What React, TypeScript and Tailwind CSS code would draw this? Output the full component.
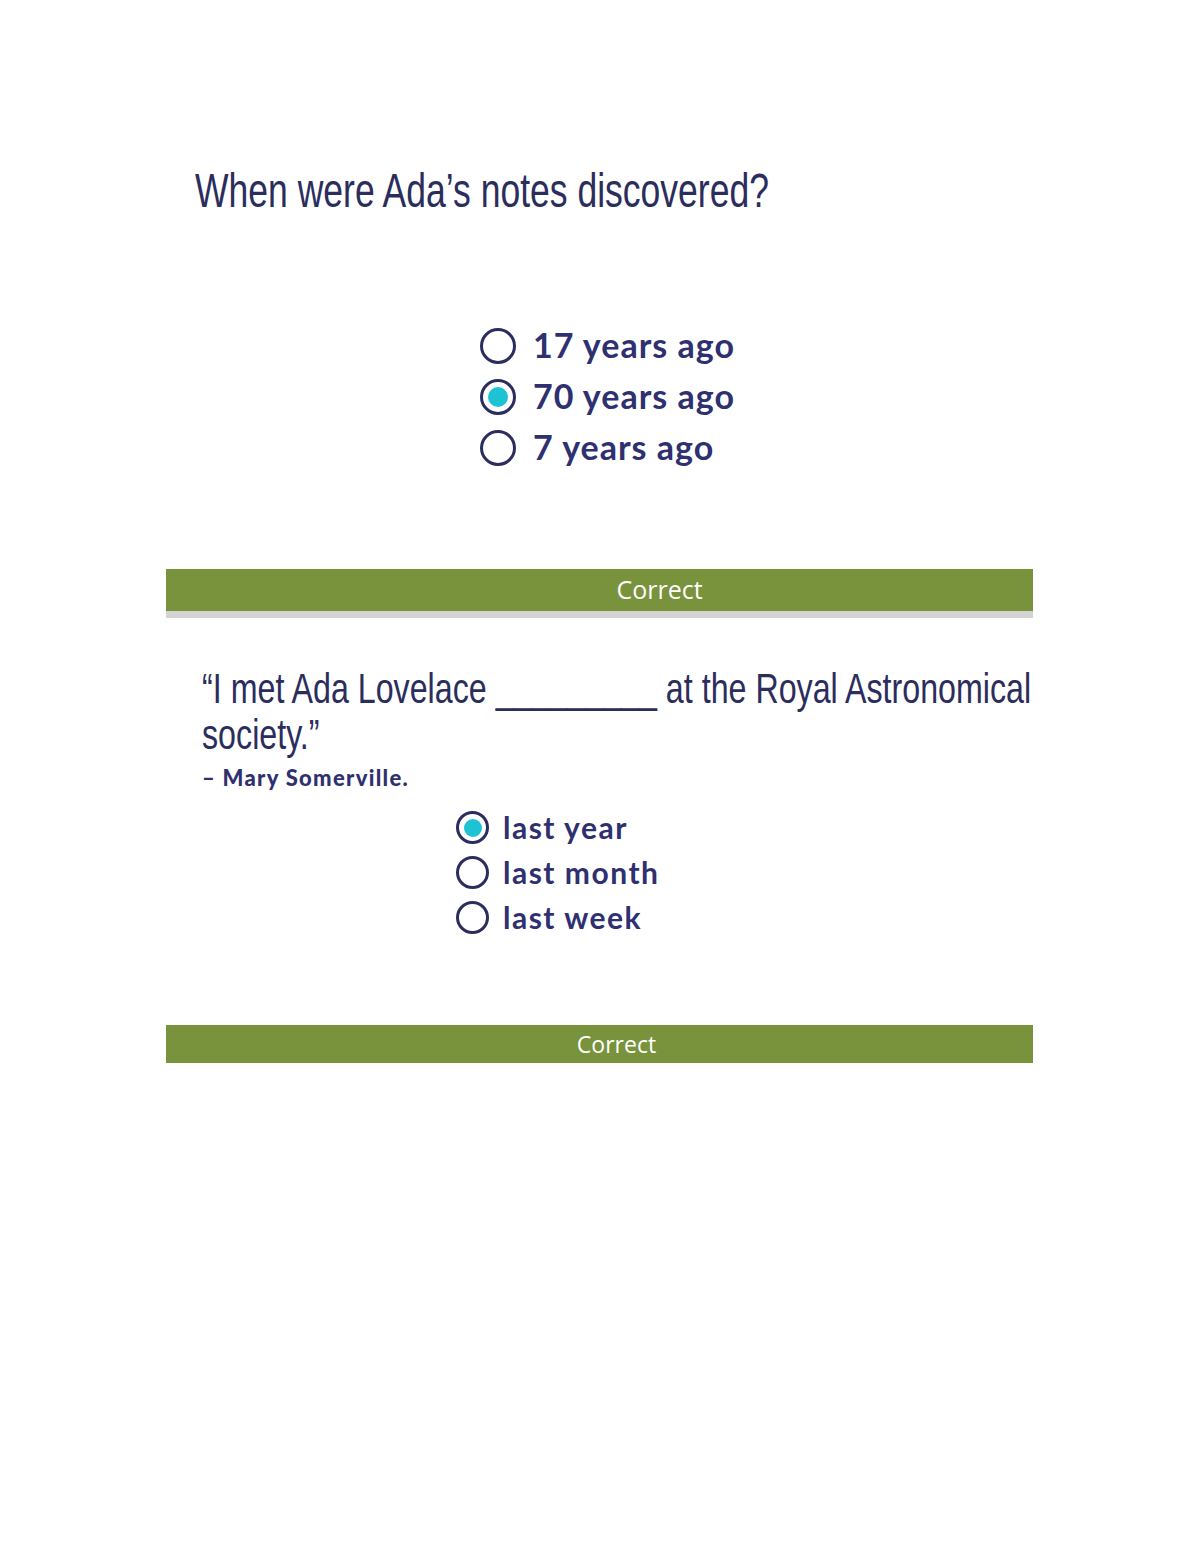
import React from 'react';

type Option = { label: string; selected?: boolean };

const q1: Option[] = [
  { label: '17 years ago' },
  { label: '70 years ago', selected: true },
  { label: '7 years ago' },
];

const q2: Option[] = [
  { label: 'last year', selected: true },
  { label: 'last month' },
  { label: 'last week' },
];

function Radio({ selected, size }: { selected?: boolean; size: 'lg' | 'sm' }) {
  return (
    <span
      className={
        size === 'lg'
          ? 'flex items-center justify-center w-[36px] h-[36px] rounded-full border-[3px] border-[#2b2d5e] shrink-0'
          : 'flex items-center justify-center w-[33px] h-[33px] rounded-full border-[3px] border-[#2b2d5e] shrink-0'
      }
    >
      {selected && (
        <span
          className={
            size === 'lg'
              ? 'w-[20px] h-[20px] rounded-full bg-[#1ec3d3]'
              : 'w-[18px] h-[18px] rounded-full bg-[#1ec3d3]'
          }
        />
      )}
    </span>
  );
}

function ResultBar({ shift, tall }: { shift: string; tall?: boolean }) {
  return (
    <div>
      <div
        className={
          tall
            ? 'h-[42px] bg-[#78933c] flex items-center justify-center'
            : 'h-[38px] bg-[#78933c] flex items-center justify-center'
        }
      >
        <span
          className={
            'text-white font-["Open_Sans"] ' +
            (tall ? 'text-[25px] ' : 'text-[23px] ') +
            shift
          }
        >
          Correct
        </span>
      </div>
      {tall && <div className="h-[7px] bg-[#d3d3d3]" />}
    </div>
  );
}

export default function App() {
  return (
    <div className="w-[1200px] min-h-[1553px] bg-white">
      <div className="ml-[166px] w-[867px] pt-[166px]">
        {/* condensed heading: no narrow face installed, so squeeze Arial-metric text */}
        <h1 className="ml-[29px] h-[50px] text-[48px] leading-[50px] text-[#2b2d5c] font-['Liberation_Sans',sans-serif] whitespace-nowrap">
          <span className="inline-block origin-left scale-x-[0.74]">When were Ada’s notes discovered?</span>
        </h1>

        <ul className="mt-[104px] pl-[314px] font-['Lato',sans-serif] font-bold text-[34px] tracking-[1px] text-[#2e3070]">
          {q1.map((o) => (
            <li key={o.label} className="h-[51px] flex items-center gap-[17px]">
              <Radio size="lg" selected={o.selected} />
              <span className="leading-none -mt-[2px]">{o.label}</span>
            </li>
          ))}
        </ul>

        <div className="mt-[96px]">
          <ResultBar tall shift="ml-[120px]" />
        </div>

        <div className="mt-[48px] ml-[36px] text-[#2b2d5c]">
          <p className="text-[42px] leading-[46px] font-['Liberation_Sans',sans-serif] whitespace-nowrap">
            <span className="block origin-left scale-x-[0.767]">“I met Ada Lovelace _________ at the Royal Astronomical</span>
            <span className="block origin-left scale-x-[0.767]">society.”</span>
          </p>
          <p className="mt-[6px] text-[22px] leading-[28px] font-['Lato',sans-serif] font-black tracking-[1.3px] text-[#2e3070]">
            – Mary Somerville.
          </p>
        </div>

        <ul className="mt-[13px] pl-[290px] font-['Lato',sans-serif] font-bold text-[30px] tracking-[1.5px] text-[#2e3070]">
          {q2.map((o) => (
            <li key={o.label} className="h-[45px] flex items-center gap-[14px]">
              <Radio size="sm" selected={o.selected} />
              <span className="leading-none -mt-[2px]">{o.label}</span>
            </li>
          ))}
        </ul>

        <div className="mt-[85px]">
          <ResultBar shift="ml-[34px]" />
        </div>
      </div>
    </div>
  );
}
